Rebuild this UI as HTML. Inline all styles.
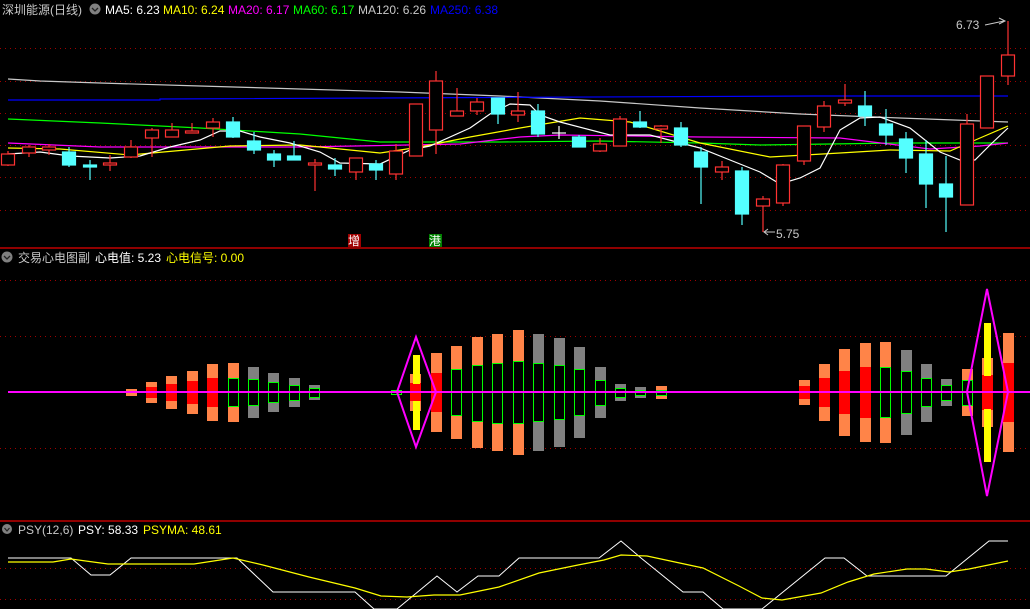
<!DOCTYPE html>
<html><head><meta charset="utf-8"><style>
html,body{margin:0;padding:0;background:#000;width:1030px;height:609px;overflow:hidden}
svg{display:block}
text{font-family:"Liberation Sans","Noto Sans CJK SC",sans-serif;font-size:12px}
</style></head><body>
<svg width="1030" height="609" viewBox="0 0 1030 609" xmlns="http://www.w3.org/2000/svg">
<rect width="1030" height="609" fill="#000"/>
<g stroke="#a00000" stroke-dasharray="1,4" stroke-width="1">
<line x1="0" y1="48.5" x2="1030" y2="48.5"/><line x1="0" y1="81.5" x2="1030" y2="81.5"/><line x1="0" y1="113.5" x2="1030" y2="113.5"/><line x1="0" y1="145.5" x2="1030" y2="145.5"/><line x1="0" y1="177.5" x2="1030" y2="177.5"/><line x1="0" y1="210.5" x2="1030" y2="210.5"/>
<line x1="0" y1="280.5" x2="1030" y2="280.5"/><line x1="0" y1="336.5" x2="1030" y2="336.5"/><line x1="0" y1="448.5" x2="1030" y2="448.5"/>
<line x1="0" y1="568.5" x2="1030" y2="568.5"/><line x1="0" y1="599.5" x2="1030" y2="599.5"/>
</g>
<line x1="0" y1="248" x2="1030" y2="248" stroke="#c00000" stroke-width="1.5"/>
<line x1="0" y1="521" x2="1030" y2="521" stroke="#c00000" stroke-width="1.5"/>
<!-- MA lines -->
<g fill="none" stroke-width="1.2">
<polyline stroke="#c8c8c8" points="8,79 40,81 100,83 200,86 300,89 400,92 500,96 600,101 700,108 800,114 900,118 1008,122"/>
<polyline stroke="#0000ff" points="8,100 160,100 160,99 814,96 1008,96"/>
<polyline stroke="#00ff00" points="8,119 100,123 200,128 300,134 380,142 500,142 600,141 700,143 760,145 900,143 1008,143"/>
<polyline stroke="#ff00ff" points="8,143 100,147 300,147 460,144 520,137 560,135 700,137 840,138 930,149 980,146 1008,143"/>
<polyline stroke="#ffff00" points="8,148 60,149 130,155 230,146 300,145 380,153 420,147 470,137 520,128 580,118 630,122 700,143 770,157 840,153 890,150 950,151 980,138 1008,126"/>
<polyline stroke="#ffffff" points="8,154 40,152 70,156 110,158 140,156 170,147 200,140 220,131 240,131 260,137 290,143 320,152 340,163 380,164 410,150 430,146 470,128 490,114 510,104 530,105 540,115 560,122 610,135 650,135 700,148 730,160 760,172 780,184 800,178 820,168 840,130 860,118 880,117 910,128 940,152 960,160 975,160 990,145 1008,128"/>
</g>
<!-- candles -->
<g stroke-width="1.2">
<g stroke="#ff3232" fill="#000">
<line x1="8" y1="151" x2="8" y2="166"/><rect x="1.5" y="154" width="13" height="11"/>
<line x1="29" y1="145" x2="29" y2="157"/><rect x="22.5" y="147" width="13" height="6"/>
<line x1="49" y1="144" x2="49" y2="155"/><rect x="42.5" y="147" width="13" height="3"/>
<line x1="110" y1="155" x2="110" y2="171"/><rect x="103.5" y="163" width="13" height="2"/>
<line x1="131" y1="140" x2="131" y2="158"/><rect x="124.5" y="147" width="13" height="10"/>
<line x1="152" y1="128" x2="152" y2="157"/><rect x="145.5" y="130" width="13" height="8"/>
<line x1="172" y1="123" x2="172" y2="137"/><rect x="165.5" y="130" width="13" height="7"/>
<line x1="192" y1="123" x2="192" y2="133"/><rect x="185.5" y="131" width="13" height="2"/>
<line x1="213" y1="118" x2="213" y2="137"/><rect x="206.5" y="122" width="13" height="6"/>
<line x1="315" y1="159" x2="315" y2="191"/><rect x="308.5" y="163" width="13" height="2"/>
<line x1="356" y1="158" x2="356" y2="180"/><rect x="349.5" y="158" width="13" height="14"/>
<line x1="396" y1="144" x2="396" y2="180"/><rect x="389.5" y="151" width="13" height="23"/>
<rect x="409.5" y="104" width="13" height="52"/>
<line x1="436" y1="71" x2="436" y2="154"/><rect x="429.5" y="81" width="13" height="49"/>
<line x1="457" y1="88" x2="457" y2="116"/><rect x="450.5" y="111" width="13" height="5"/>
<line x1="477" y1="98" x2="477" y2="115"/><rect x="470.5" y="102" width="13" height="9"/>
<line x1="518" y1="92" x2="518" y2="122"/><rect x="511.5" y="111" width="13" height="4"/>
<line x1="600" y1="138" x2="600" y2="152"/><rect x="593.5" y="144" width="13" height="7"/>
<line x1="620" y1="116" x2="620" y2="146"/><rect x="613.5" y="119" width="13" height="27"/>
<line x1="661" y1="125" x2="661" y2="143"/><rect x="654.5" y="126" width="13" height="3"/>
<line x1="722" y1="161" x2="722" y2="180"/><rect x="715.5" y="167" width="13" height="5"/>
<line x1="763" y1="196" x2="763" y2="232"/><rect x="756.5" y="199" width="13" height="7"/>
<line x1="783" y1="164" x2="783" y2="206"/><rect x="776.5" y="165" width="13" height="38"/>
<line x1="804" y1="126" x2="804" y2="165"/><rect x="797.5" y="126" width="13" height="35"/>
<line x1="824" y1="101" x2="824" y2="132"/><rect x="817.5" y="106" width="13" height="21"/>
<line x1="845" y1="84" x2="845" y2="106"/><rect x="838.5" y="100" width="13" height="3"/>
<line x1="967" y1="114" x2="967" y2="205"/><rect x="960.5" y="124" width="13" height="81"/>
<rect x="980.5" y="76" width="13" height="52"/>
<line x1="1008" y1="21" x2="1008" y2="85"/><rect x="1001.5" y="55" width="13" height="21"/>
</g>
<g stroke="#54ffff" fill="#54ffff">
<line x1="69" y1="147" x2="69" y2="167"/><rect x="62.5" y="152" width="13" height="13"/>
<line x1="90" y1="160" x2="90" y2="180"/><rect x="83.5" y="165" width="13" height="2"/>
<line x1="233" y1="117" x2="233" y2="138"/><rect x="226.5" y="122" width="13" height="15"/>
<line x1="254" y1="132" x2="254" y2="154"/><rect x="247.5" y="141" width="13" height="9"/>
<line x1="274" y1="150" x2="274" y2="167"/><rect x="267.5" y="154" width="13" height="6"/>
<line x1="294" y1="141" x2="294" y2="160"/><rect x="287.5" y="156" width="13" height="4"/>
<line x1="335" y1="158" x2="335" y2="176"/><rect x="328.5" y="165" width="13" height="4"/>
<line x1="376" y1="160" x2="376" y2="180"/><rect x="369.5" y="164" width="13" height="6"/>
<line x1="498" y1="98" x2="498" y2="124"/><rect x="491.5" y="98" width="13" height="16"/>
<line x1="538" y1="104" x2="538" y2="137"/><rect x="531.5" y="111" width="13" height="23"/>
<line x1="579" y1="135" x2="579" y2="147"/><rect x="572.5" y="137" width="13" height="10"/>
<line x1="640" y1="111" x2="640" y2="128"/><rect x="633.5" y="122" width="13" height="5"/>
<line x1="681" y1="122" x2="681" y2="147"/><rect x="674.5" y="128" width="13" height="17"/>
<line x1="701" y1="147" x2="701" y2="204"/><rect x="694.5" y="152" width="13" height="15"/>
<line x1="742" y1="167" x2="742" y2="225"/><rect x="735.5" y="171" width="13" height="43"/>
<line x1="865" y1="91" x2="865" y2="126"/><rect x="858.5" y="106" width="13" height="10"/>
<line x1="886" y1="109" x2="886" y2="145"/><rect x="879.5" y="124" width="13" height="11"/>
<line x1="906" y1="132" x2="906" y2="173"/><rect x="899.5" y="139" width="13" height="19"/>
<line x1="926" y1="140" x2="926" y2="208"/><rect x="919.5" y="154" width="13" height="30"/>
<line x1="946" y1="156" x2="946" y2="232"/><rect x="939.5" y="184" width="13" height="13"/>
</g>
<line x1="559" y1="126" x2="559" y2="139" stroke="#fff"/><line x1="552" y1="133" x2="566" y2="133" stroke="#fff"/>
</g>
<!-- annotations -->
<text x="956" y="29" fill="#c8c8c8">6.73</text>
<path d="M985,25 L1004,21 M999,18 L1005,21 L999,24" stroke="#c8c8c8" fill="none"/>
<text x="776" y="238" fill="#c8c8c8">5.75</text>
<path d="M764,232 L775,232 M768,229 L764,232 L768,235" stroke="#c8c8c8" fill="none"/>
<rect x="348" y="234" width="13" height="13" fill="#a00000"/><text x="348" y="245" fill="#fff" font-size="12">增</text>
<rect x="429" y="234" width="13" height="13" fill="#008000"/><text x="429" y="245" fill="#fff" font-size="12">港</text>
<!-- headers -->
<text x="2" y="14" fill="#c8c8c8">深圳能源(日线)</text>
<circle cx="95" cy="9" r="5.5" fill="#808080"/><path d="M92,8 L95,11 L98,8" stroke="#222" fill="none" stroke-width="1.3"/>
<text x="105" y="14" fill="#fff">MA5: 6.23</text>
<text x="163" y="14" fill="#ffff00">MA10: 6.24</text>
<text x="228" y="14" fill="#ff00ff">MA20: 6.17</text>
<text x="293" y="14" fill="#00ff00">MA60: 6.17</text>
<text x="358" y="14" fill="#c8c8c8">MA120: 6.26</text>
<text x="430" y="14" fill="#0000ff">MA250: 6.38</text>
<circle cx="7" cy="257" r="5.5" fill="#808080"/><path d="M4,256 L7,259 L10,256" stroke="#222" fill="none" stroke-width="1.3"/>
<text x="18" y="262" fill="#c8c8c8">交易心电图副</text>
<text x="95" y="262" fill="#fff">心电值: 5.23</text>
<text x="166" y="262" fill="#ffff00">心电信号: 0.00</text>
<circle cx="7" cy="529" r="5" fill="#808080"/><path d="M4.5,528 L7,531 L9.5,528" stroke="#222" fill="none" stroke-width="1.2"/>
<text x="18" y="534" fill="#c8c8c8" font-size="11">PSY(12,6)</text>
<text x="78" y="534" fill="#fff" font-size="11">PSY: 58.33</text>
<text x="143" y="534" fill="#ffff00" font-size="11">PSYMA: 48.61</text>
<!-- ECG panel -->
<g>
<rect x="126" y="389" width="11" height="7" fill="#ff8448"/>
<rect x="146" y="382" width="11" height="21" fill="#ff8448"/><rect x="146" y="387" width="11" height="11" fill="#f00"/>
<rect x="166" y="376" width="11" height="33" fill="#ff8448"/><rect x="166" y="384" width="11" height="17" fill="#f00"/>
<rect x="187" y="371" width="11" height="43" fill="#ff8448"/><rect x="187" y="381" width="11" height="23" fill="#f00"/>
<rect x="207" y="364" width="11" height="57" fill="#ff8448"/><rect x="207" y="378" width="11" height="29" fill="#f00"/>
<rect x="228" y="363" width="11" height="59" fill="#ff8448"/>
<rect x="248" y="367" width="11" height="51" fill="#808080"/>
<rect x="268" y="373" width="11" height="39" fill="#808080"/>
<rect x="289" y="378" width="11" height="29" fill="#808080"/>
<rect x="309" y="385" width="11" height="15" fill="#808080"/>
<rect x="391" y="390" width="11" height="5" fill="#ff8448"/>
<rect x="431" y="353" width="11" height="79" fill="#ff8448"/><rect x="431" y="373" width="11" height="39" fill="#f00"/>
<rect x="451" y="346" width="11" height="93" fill="#ff8448"/>
<rect x="472" y="337" width="11" height="111" fill="#ff8448"/>
<rect x="492" y="334" width="11" height="117" fill="#ff8448"/>
<rect x="513" y="330" width="11" height="125" fill="#ff8448"/>
<rect x="533" y="334" width="11" height="117" fill="#808080"/>
<rect x="554" y="338" width="11" height="109" fill="#808080"/>
<rect x="574" y="347" width="11" height="91" fill="#808080"/>
<rect x="595" y="367" width="11" height="51" fill="#808080"/>
<rect x="615" y="384" width="11" height="17" fill="#808080"/>
<rect x="635" y="387" width="11" height="11" fill="#808080"/>
<rect x="656" y="386" width="11" height="13" fill="#ff8448"/>
<rect x="799" y="380" width="11" height="25" fill="#ff8448"/><rect x="799" y="386" width="11" height="13" fill="#f00"/>
<rect x="819" y="364" width="11" height="57" fill="#ff8448"/><rect x="819" y="378" width="11" height="29" fill="#f00"/>
<rect x="839" y="349" width="11" height="87" fill="#ff8448"/><rect x="839" y="371" width="11" height="43" fill="#f00"/>
<rect x="860" y="343" width="11" height="99" fill="#ff8448"/><rect x="860" y="367" width="11" height="51" fill="#f00"/>
<rect x="880" y="342" width="11" height="101" fill="#ff8448"/>
<rect x="901" y="350" width="11" height="85" fill="#808080"/>
<rect x="921" y="364" width="11" height="58" fill="#808080"/>
<rect x="941" y="379" width="11" height="27" fill="#808080"/>
<rect x="962" y="369" width="11" height="47" fill="#ff8448"/>
<rect x="1003" y="333" width="11" height="119" fill="#ff8448"/><rect x="1003" y="363" width="11" height="59" fill="#f00"/>
<rect x="410" y="374" width="11" height="37" fill="#ff8448"/><rect x="410" y="383" width="11" height="18" fill="#f00"/>
<rect x="413" y="355" width="7" height="29" fill="#ff0"/><rect x="413" y="401" width="7" height="29" fill="#ff0"/>
<rect x="982" y="358" width="11" height="69" fill="#ff8448"/><rect x="982" y="375" width="11" height="35" fill="#f00"/>
<rect x="984" y="323" width="7" height="53" fill="#ff0"/><rect x="984" y="409" width="7" height="53" fill="#ff0"/>
</g>
<g fill="#000" stroke="#00ff00" stroke-width="1">
<rect x="228.5" y="378.5" width="10" height="28"/>
<rect x="248.5" y="379.5" width="10" height="26"/>
<rect x="268.5" y="382.5" width="10" height="20"/>
<rect x="289.5" y="385.5" width="10" height="15"/>
<rect x="309.5" y="388.5" width="10" height="9"/>
<rect x="391.5" y="390.5" width="10" height="4"/>
<rect x="451.5" y="369.5" width="10" height="46"/>
<rect x="472.5" y="365.5" width="10" height="56"/>
<rect x="492.5" y="363.5" width="10" height="60"/>
<rect x="513.5" y="361.5" width="10" height="62"/>
<rect x="533.5" y="363.5" width="10" height="58"/>
<rect x="554.5" y="365.5" width="10" height="54"/>
<rect x="574.5" y="369.5" width="10" height="46"/>
<rect x="595.5" y="380.5" width="10" height="25"/>
<rect x="615.5" y="388.5" width="10" height="9"/>
<rect x="635.5" y="390.5" width="10" height="5"/>
<rect x="656.5" y="390.5" width="10" height="5"/>
<rect x="880.5" y="367.5" width="10" height="50"/>
<rect x="901.5" y="371.5" width="10" height="42"/>
<rect x="921.5" y="378.5" width="10" height="28"/>
<rect x="941.5" y="385.5" width="10" height="15"/>
<rect x="962.5" y="380.5" width="10" height="25"/>
</g>
<line x1="8" y1="392" x2="1030" y2="392" stroke="#ff00ff" stroke-width="2"/>
<path d="M416,337 L397,392 L416,447 L436,392 Z" fill="none" stroke="#ff00ff" stroke-width="2"/>
<path d="M987,289 L967,392 L987,496 L1008,392 Z" fill="none" stroke="#ff00ff" stroke-width="2"/>
<!-- PSY -->
<polyline fill="none" stroke="#fff" stroke-width="1" points="8,558 71,558 91,575 110,575 131,558 237,558 273,592 355,592 374,609 397,609 437,576 457,592 478,576 499,576 519,558 599,558 621,541 641,558 683,592 703,592 723,609 762,609 825,558 844,558 867,576 946,576 989,541 1008,541"/>
<polyline fill="none" stroke="#ffff00" stroke-width="1.2" points="8,562 53,562 71,559 108,564 194,564 233,558 263,565 309,577 355,588 381,596 407,597 434,595 460,595 499,587 539,573 578,565 604,560 621,555 647,556 703,568 739,586 762,598 782,600 821,593 848,582 874,574 907,569 926,569 949,572 969,569 1008,561"/>
</svg>
</body></html>
